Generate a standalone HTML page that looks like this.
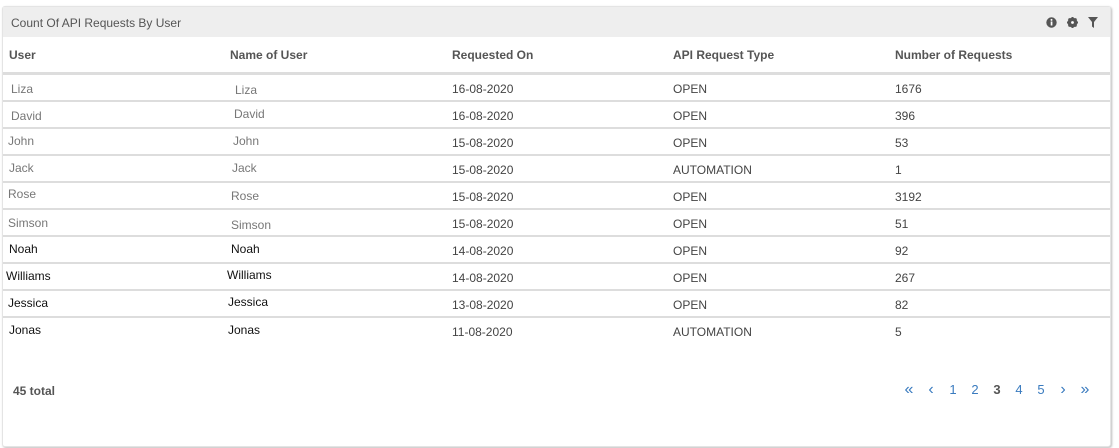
<!DOCTYPE html>
<html><head><style>
body{margin:0;background:#fff;font-family:"Liberation Sans",sans-serif;width:1119px;height:448px;overflow:hidden;position:relative}
.panel{position:absolute;left:2px;top:6px;width:1107px;height:439px;border:1px solid #e4e4e4;border-radius:3px;box-shadow:1px 1px 2px #bbb;background:#fff}
.hd{height:30px;background:#eeeeee;font-size:12px;color:#555;line-height:32px;padding-left:8px}
.icons{position:absolute;right:12px;top:10px;display:flex;gap:10px}
.th,.tr{position:absolute;left:0;width:1107px;font-size:12px}
.th{top:31px;height:34px;border-bottom:3px solid #ddd;font-weight:bold;color:#555}
.tr{height:25px;border-bottom:2px solid #ddd;color:#444}
span.c{position:absolute;top:10px}
.tr span.c{top:7px}
.g{color:#777}.k{color:#111}
.foot{position:absolute;top:377px;left:10px;font-size:12px;font-weight:bold;color:#555}
.pg{position:absolute;top:375px;right:14px;font-size:13px;color:#3a7bbf;display:flex;gap:0}
.pg span{display:inline-block;text-align:center}
.pg .a{font-size:16px;line-height:15px}
</style></head><body>
<div class="panel">
<div class="hd">Count Of API Requests By User</div>
<div class="icons">
<svg width="11" height="11" viewBox="0 0 11 11"><circle cx="5.5" cy="5.5" r="5.2" fill="#555"/><rect x="4.7" y="4.5" width="1.7" height="4" fill="#fff"/><circle cx="5.5" cy="2.9" r="1" fill="#fff"/></svg>
<svg width="11" height="11" viewBox="0 0 11 11"><circle cx="5.5" cy="5.5" r="3.7" fill="none" stroke="#555" stroke-width="2.4"/><g stroke="#555" stroke-width="2"><line x1="5.5" y1="0" x2="5.5" y2="11"/><line x1="0" y1="5.5" x2="11" y2="5.5"/><line x1="1.6" y1="1.6" x2="9.4" y2="9.4"/><line x1="9.4" y1="1.6" x2="1.6" y2="9.4"/></g><circle cx="5.5" cy="5.5" r="1.4" fill="#fff"/></svg>
<svg width="10" height="11" viewBox="0 0 10 11"><path d="M0 0H10L6 5V11L4 9.5V5Z" fill="#555"/></svg>
</div>
<div class="th"><span class="c" style="left:6px">User</span><span class="c" style="left:227px">Name of User</span><span class="c" style="left:449px">Requested On</span><span class="c" style="left:670px">API Request Type</span><span class="c" style="left:892px">Number of Requests</span></div>

<div class="tr" style="top:68px"><span class="c g" style="left:8px">Liza</span><span class="c g" style="left:232px;top:8px">Liza</span><span class="c" style="left:449px">16-08-2020</span><span class="c" style="left:670px">OPEN</span><span class="c" style="left:892px">1676</span></div>
<div class="tr" style="top:95px"><span class="c g" style="left:8px">David</span><span class="c g" style="left:231px;top:5px">David</span><span class="c" style="left:449px">16-08-2020</span><span class="c" style="left:670px">OPEN</span><span class="c" style="left:892px">396</span></div>
<div class="tr" style="top:122px"><span class="c g" style="left:5px;top:5px">John</span><span class="c g" style="left:230px;top:5px">John</span><span class="c" style="left:449px">15-08-2020</span><span class="c" style="left:670px">OPEN</span><span class="c" style="left:892px">53</span></div>
<div class="tr" style="top:149px"><span class="c g" style="left:6px;top:5px">Jack</span><span class="c g" style="left:229px;top:5px">Jack</span><span class="c" style="left:449px">15-08-2020</span><span class="c" style="left:670px">AUTOMATION</span><span class="c" style="left:892px">1</span></div>
<div class="tr" style="top:176px"><span class="c g" style="left:5px;top:4px">Rose</span><span class="c g" style="left:228px;top:6px">Rose</span><span class="c" style="left:449px">15-08-2020</span><span class="c" style="left:670px">OPEN</span><span class="c" style="left:892px">3192</span></div>
<div class="tr" style="top:203px"><span class="c g" style="left:5px;top:6px">Simson</span><span class="c g" style="left:228px;top:8px">Simson</span><span class="c" style="left:449px">15-08-2020</span><span class="c" style="left:670px">OPEN</span><span class="c" style="left:892px">51</span></div>
<div class="tr" style="top:230px"><span class="c k" style="left:6px;top:5px">Noah</span><span class="c k" style="left:228px;top:5px">Noah</span><span class="c" style="left:449px">14-08-2020</span><span class="c" style="left:670px">OPEN</span><span class="c" style="left:892px">92</span></div>
<div class="tr" style="top:257px"><span class="c k" style="left:3px;top:5px">Williams</span><span class="c k" style="left:224px;top:4px">Williams</span><span class="c" style="left:449px">14-08-2020</span><span class="c" style="left:670px">OPEN</span><span class="c" style="left:892px">267</span></div>
<div class="tr" style="top:284px"><span class="c k" style="left:5px;top:5px">Jessica</span><span class="c k" style="left:225px;top:4px">Jessica</span><span class="c" style="left:449px">13-08-2020</span><span class="c" style="left:670px">OPEN</span><span class="c" style="left:892px">82</span></div>
<div class="tr" style="top:311px;border-bottom:none"><span class="c k" style="left:6px;top:5px">Jonas</span><span class="c k" style="left:225px;top:5px">Jonas</span><span class="c" style="left:449px">11-08-2020</span><span class="c" style="left:670px">AUTOMATION</span><span class="c" style="left:892px">5</span></div>

<div class="foot">45 total</div>
<div class="pg"><span class="a" style="width:22px">«</span><span class="a" style="width:22px">‹</span><span style="width:22px">1</span><span style="width:22px">2</span><span style="width:22px;color:#555;font-weight:bold">3</span><span style="width:22px">4</span><span style="width:22px">5</span><span class="a" style="width:22px">›</span><span class="a" style="width:22px">»</span></div>
</div>
</body></html>
